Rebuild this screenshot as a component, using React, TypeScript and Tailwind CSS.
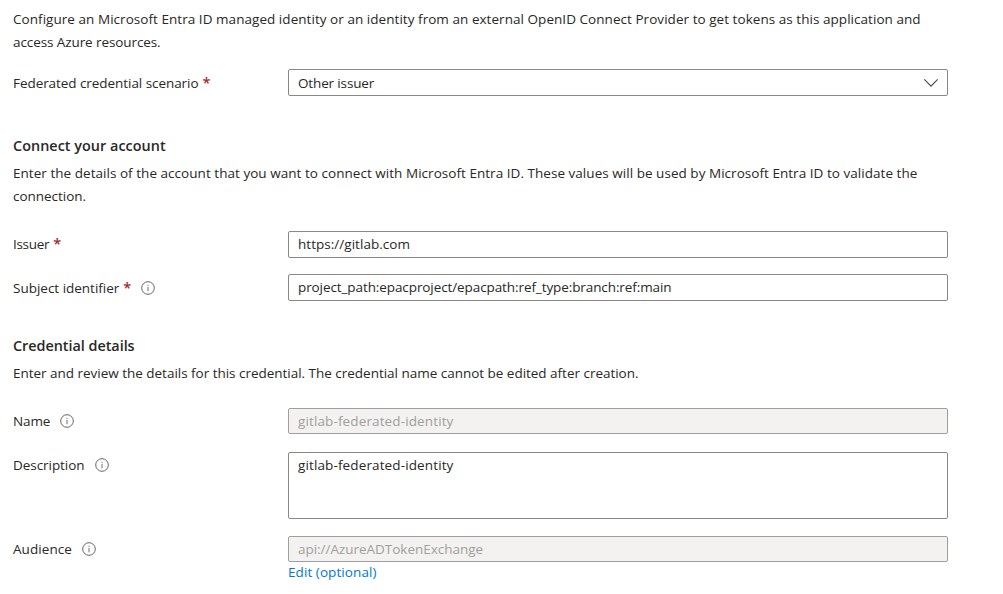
import type { ReactNode } from 'react';

function InfoIcon() {
  return (
    <svg className="mb-[2px] ml-[10px] h-[14px] w-[14px] shrink-0" viewBox="0 0 14 14" fill="none" stroke="#605e5c">
      <circle cx="7" cy="7" r="6.3" strokeWidth="0.95" />
      <path d="M7 5.9v4.4" strokeWidth="0.9" />
      <path d="M7 3.8v1.1" strokeWidth="0.9" />
    </svg>
  );
}

function Label({ text, spacing, required, info, offset = '' }: { text: string; spacing: string; required?: boolean; info?: boolean; offset?: string }) {
  return (
    <div className={`flex h-[27px] w-[275px] shrink-0 items-center whitespace-nowrap ${offset}`}>
      <span className={spacing}>{text}</span>
      {required && <span className="mb-[3px] ml-[4px] text-[14.5px] font-semibold text-[#a4262c]">*</span>}
      {info && <InfoIcon />}
    </div>
  );
}

function Row({ className, children }: { className: string; children: ReactNode }) {
  return <div className={`flex items-start ${className}`}>{children}</div>;
}

const field = 'flex w-[660px] items-center rounded-[2px] border px-[9px] whitespace-nowrap';
const enabled = 'h-[27px] border-[#8a8886] bg-white';
const disabled = 'h-[26px] border-[#a19f9d] bg-[#f3f2f1] text-[#a19f9d]';

export default function App() {
  return (
    <main className="h-[594px] w-[1003px] overflow-hidden bg-white pl-[13px] pt-2 font-['Open_Sans','Noto_Sans',sans-serif] text-[13.5px] leading-[23px] text-[#292827]">
      <p className="whitespace-nowrap">
        <span className="tracking-[0.045px]">
          Configure an Microsoft Entra ID managed identity or an identity from an external OpenID Connect Provider to get tokens as this application and
        </span>
        <br />
        <span className="tracking-[-0.09px]">access Azure resources.</span>
      </p>

      <Row className="mt-[15px]">
        <Label text="Federated credential scenario" spacing="tracking-[-0.06px]" required offset="mt-px" />
        <div className={`${field} ${enabled} justify-between`}>
          <span className="mt-[2px] tracking-[-0.14px]">Other issuer</span>
          <svg className="-mr-[1px] h-[14px] w-[16px]" viewBox="0 0 16 14" fill="none" stroke="#484644" strokeWidth="1.1">
            <path d="M1.3 3.4 8 10.1l6.7-6.7" />
          </svg>
        </div>
      </Row>

      <h2 className="mt-[37px] text-[14.4px] font-semibold tracking-[0.03px]">Connect your account</h2>
      <p className="mt-[5px] whitespace-nowrap">
        <span className="tracking-[0.037px]">
          Enter the details of the account that you want to connect with Microsoft Entra ID. These values will be used by Microsoft Entra ID to validate the
        </span>
        <br />
        <span className="tracking-[-0.03px]">connection.</span>
      </p>

      <Row className="mt-[23px]">
        <Label text="Issuer" spacing="tracking-[-0.3px]" required />
        <div className={`${field} ${enabled}`}>
          <span className="tracking-[0.034px]">https://gitlab.com</span>
        </div>
      </Row>
      <Row className="mt-4">
        <Label text="Subject identifier" spacing="tracking-[-0.01px]" required info offset="mt-px" />
        <div className={`${field} ${enabled}`}>
          <span className="tracking-[-0.092px]">project_path:epacproject/epacpath:ref_type:branch:ref:main</span>
        </div>
      </Row>

      <h2 className="mt-[32px] text-[14.4px] font-semibold tracking-[-0.03px]">Credential details</h2>
      <p className="mt-[5px] whitespace-nowrap tracking-[-0.02px]">
        Enter and review the details for this credential. The credential name cannot be edited after creation.
      </p>

      <Row className="mt-[23px]">
        <Label text="Name" spacing="tracking-[-0.1px]" info />
        <div className={`${field} ${disabled}`}>
          <span className="tracking-[0.125px]">gitlab-federated-identity</span>
        </div>
      </Row>
      <Row className="mt-[17px]">
        <Label text="Description" spacing="tracking-[-0.05px]" info />
        <div className="h-[67px] w-[660px] rounded-[2px] border border-[#8a8886] px-[9px] pt-px">
          <span className="tracking-[0.125px]">gitlab-federated-identity</span>
        </div>
      </Row>
      <Row className="mt-[17px]">
        <Label text="Audience" spacing="tracking-[0.07px]" info />
        <div>
          <div className={`${field} ${disabled}`}>
            <span className="tracking-[-0.027px]">api://AzureADTokenExchange</span>
          </div>
          <a className="-mt-px block tracking-[0.076px] text-[#0078d4]">Edit (optional)</a>
        </div>
      </Row>
    </main>
  );
}
